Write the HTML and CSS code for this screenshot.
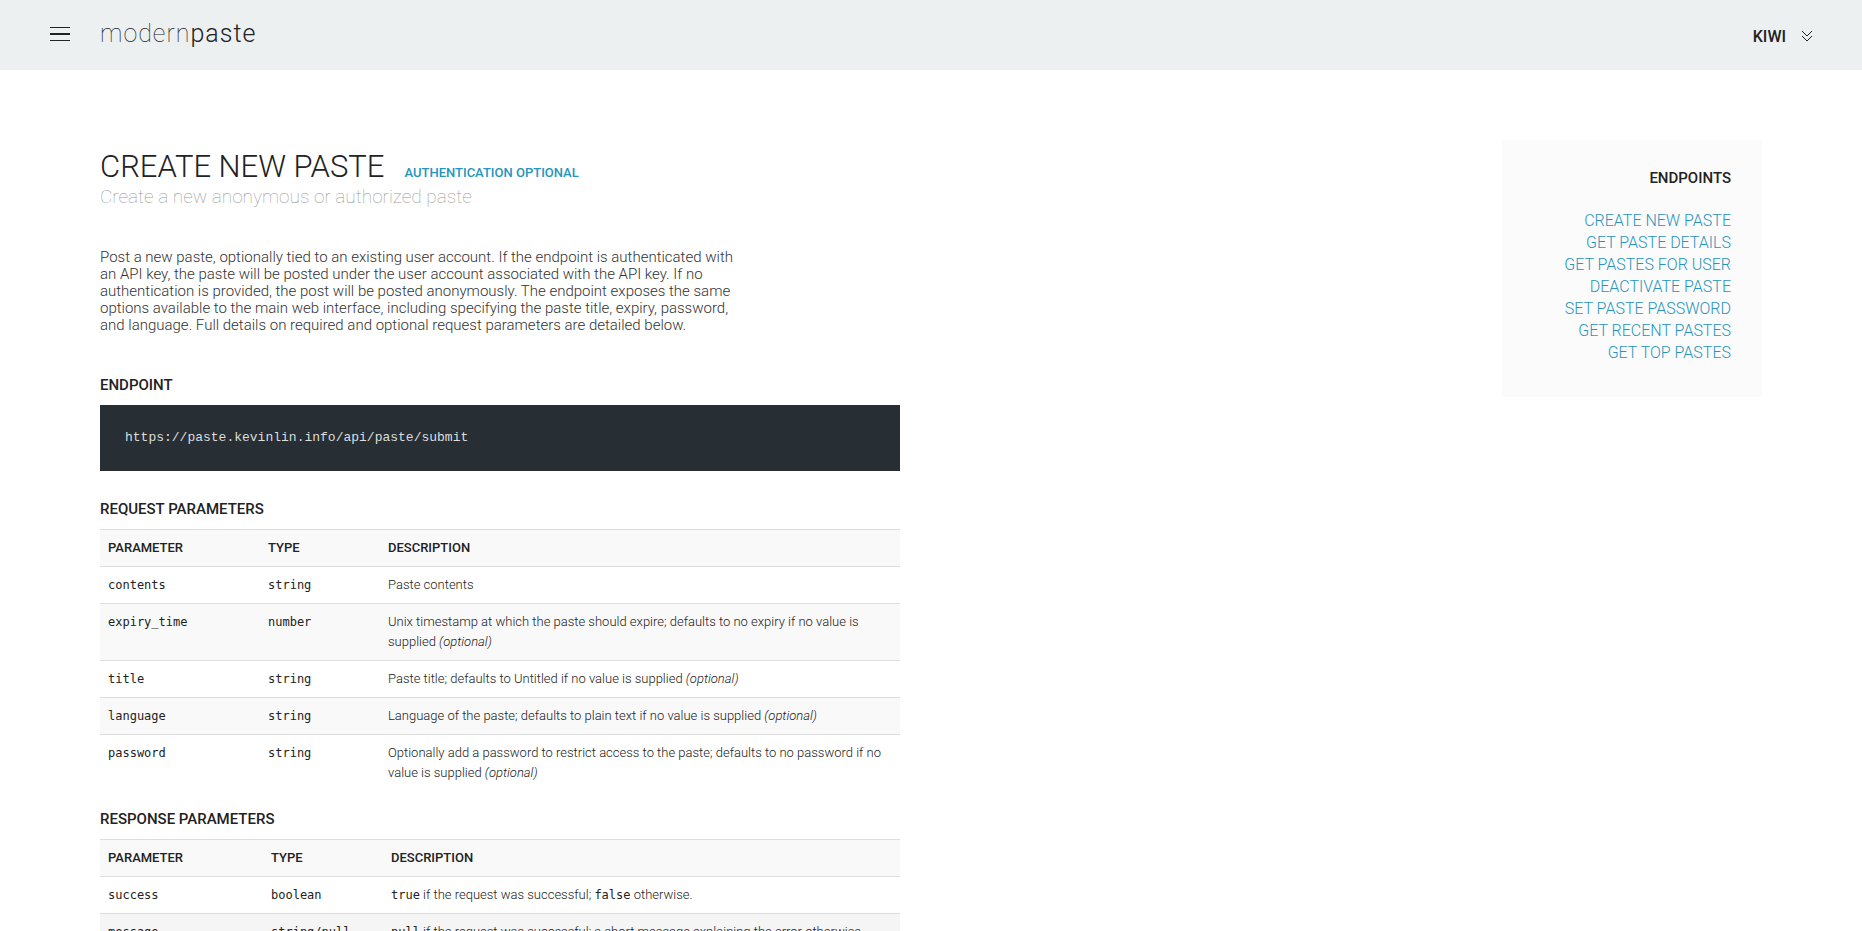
FILE: index.html
```html
<!DOCTYPE html>
<html lang="en">
<head>
    <meta charset="UTF-8">
    <meta name="viewport" content="width=device-width, initial-scale=1.0">
    <title>modernpaste - API documentation</title>
    <link rel="stylesheet" href="styles.css">
</head>
<body>
    <header class="header">
        <button type="button" class="menu-button" aria-label="Menu">
            <svg width="20" height="14" viewBox="0 0 20 14" shape-rendering="crispEdges">
                <path d="M0 0h20v1H0zM0 6h20v2H0zM0 13h20v1H0z" fill="#222"/>
            </svg>
        </button>
        <a href="#" class="logo">modern<span class="logo-strong">paste</span></a>
        <button type="button" class="user-menu">
            <span>KIWI</span>
            <svg width="10" height="10" viewBox="0 0 10 10" fill="none" stroke="#222" shape-rendering="crispEdges">
                <path d="M0 0l5 5 5-5M0 5l5 5 5-5"/>
            </svg>
        </button>
    </header>

    <div class="page">
        <main class="docs">
            <div class="title-row">
                <h1>CREATE NEW PASTE</h1>
                <span class="auth">AUTHENTICATION OPTIONAL</span>
            </div>
            <p class="subtitle">Create a new anonymous or authorized paste</p>

            <p class="intro">
                Post a new paste, optionally tied to an existing user account. If the endpoint is authenticated with
                an API key, the paste will be posted under the user account associated with the API key. If no
                authentication is provided, the post will be posted anonymously. The endpoint exposes the same
                options available to the main web interface, including specifying the paste title, expiry, password,
                and language. Full details on required and optional request parameters are detailed below.
            </p>

            <h2>ENDPOINT</h2>
            <pre class="endpoint">https://paste.kevinlin.info/api/paste/submit</pre>

            <h2>REQUEST PARAMETERS</h2>
            <table class="params">
                <thead>
                    <tr>
                        <th class="col-name">PARAMETER</th>
                        <th class="col-type">TYPE</th>
                        <th>DESCRIPTION</th>
                    </tr>
                </thead>
                <tbody>
                    <tr>
                        <td><code>contents</code></td>
                        <td><code>string</code></td>
                        <td>Paste contents</td>
                    </tr>
                    <tr>
                        <td><code>expiry_time</code></td>
                        <td><code>number</code></td>
                        <td>Unix timestamp at which the paste should expire; defaults to no expiry if no value is supplied <em>(optional)</em></td>
                    </tr>
                    <tr>
                        <td><code>title</code></td>
                        <td><code>string</code></td>
                        <td>Paste title; defaults to Untitled if no value is supplied <em>(optional)</em></td>
                    </tr>
                    <tr>
                        <td><code>language</code></td>
                        <td><code>string</code></td>
                        <td>Language of the paste; defaults to plain text if no value is supplied <em>(optional)</em></td>
                    </tr>
                    <tr>
                        <td><code>password</code></td>
                        <td><code>string</code></td>
                        <td>Optionally add a password to restrict access to the paste; defaults to no password if no value is supplied <em>(optional)</em></td>
                    </tr>
                </tbody>
            </table>

            <h2>RESPONSE PARAMETERS</h2>
            <table class="params response">
                <thead>
                    <tr>
                        <th class="col-name">PARAMETER</th>
                        <th class="col-type">TYPE</th>
                        <th>DESCRIPTION</th>
                    </tr>
                </thead>
                <tbody>
                    <tr>
                        <td><code>success</code></td>
                        <td><code>boolean</code></td>
                        <td><code>true</code> if the request was successful; <code>false</code> otherwise.</td>
                    </tr>
                    <tr class="active">
                        <td><code>message</code></td>
                        <td><code>string/null</code></td>
                        <td><code>null</code> if the request was successful; a short message explaining the error otherwise.</td>
                    </tr>
                </tbody>
            </table>
        </main>

        <nav class="endpoints">
            <h2>ENDPOINTS</h2>
            <ul>
                <li><a href="#">CREATE NEW PASTE</a></li>
                <li><a href="#">GET PASTE DETAILS</a></li>
                <li><a href="#">GET PASTES FOR USER</a></li>
                <li><a href="#">DEACTIVATE PASTE</a></li>
                <li><a href="#">SET PASTE PASSWORD</a></li>
                <li><a href="#">GET RECENT PASTES</a></li>
                <li><a href="#">GET TOP PASTES</a></li>
            </ul>
        </nav>
    </div>
</body>
</html>
```
FILE: styles.css
```css
* {
    box-sizing: border-box;
}
body {
    margin: 0;
    font-family: Roboto, "Liberation Sans", sans-serif;
    font-size: 15px;
    font-weight: 300;
    color: #222;
    background: #fff;
}
button {
    padding: 0;
    border: none;
    background: none;
    font: inherit;
    color: inherit;
    cursor: pointer;
}
svg {
    display: block;
}
h1, h2, p, ul, pre {
    margin: 0;
}

/* header */
.header {
    display: flex;
    align-items: center;
    height: 70px;
    padding: 0 50px 2px;
    background: #ecf0f1;
}
.logo {
    margin-left: 30px;
    font-size: 25px;
    line-height: 32px;
    font-weight: 100;
    letter-spacing: 1px;
    color: #222;
    text-decoration: none;
}
.logo-strong {
    font-weight: 300;
}
.user-menu {
    display: flex;
    align-items: center;
    gap: 16px;
    margin-left: auto;
    padding-top: 4px;
    font-size: 16px;
    font-weight: 500;
}

/* page */
.page {
    display: flex;
    justify-content: space-between;
    align-items: flex-start;
    gap: 40px;
    padding: 70px 100px;
}
.docs {
    flex: 0 1 800px;
    padding-top: 9px;
}
.title-row {
    display: flex;
    align-items: baseline;
    gap: 20px;
}
h1 {
    font-size: 31px;
    line-height: 36px;
    font-weight: 300;
}
.auth {
    font-size: 13px;
    font-weight: 500;
    color: #2894bb;
}
.subtitle {
    font-size: 19px;
    line-height: 24px;
    font-weight: 100;
    color: #999;
}
.intro {
    max-width: 645px;
    margin: 40px 0 41px;
    line-height: 17px;
    color: #333;
}
h2 {
    margin-bottom: 10px;
    font-size: 15px;
    line-height: 20px;
    font-weight: 500;
}
.endpoint {
    margin-bottom: 28px;
    padding: 25px;
    background: #272f35;
    color: #ddd;
    font-family: "Liberation Mono", monospace;
    font-size: 13px;
    line-height: 16px;
    font-weight: 400;
}

/* parameter tables */
.params {
    width: 100%;
    margin-bottom: 18px;
    border-collapse: separate;
    border-spacing: 0;
    font-size: 13px;
    line-height: 20px;
}
.params th,
.params td {
    padding: 8px;
    border-top: 1px solid #ddd;
    text-align: left;
    vertical-align: top;
    color: #222;
}
.params th {
    font-weight: 500;
}
.params thead tr,
.params tbody tr:nth-child(even) {
    background: #f9f9f9;
}
.params tbody tr.active {
    background: #f5f5f5;
}
.col-name {
    width: 160px;
}
.col-type {
    width: 120px;
}
.response .col-name {
    width: 163px;
}
code {
    font-family: "DejaVu Sans Mono", monospace;
    font-size: 12px;
    line-height: 16px;
    font-weight: 400;
}

/* endpoint list */
.endpoints {
    flex: 0 0 260px;
    padding: 28px 31px 33px;
    background: #fbfbfb;
    text-align: right;
}
.endpoints h2 {
    margin-bottom: 22px;
}
.endpoints ul {
    padding: 0;
    list-style: none;
}
.endpoints li {
    font-size: 16px;
    line-height: 22px;
}
.endpoints a {
    color: #2894bb;
    text-decoration: none;
}
```
